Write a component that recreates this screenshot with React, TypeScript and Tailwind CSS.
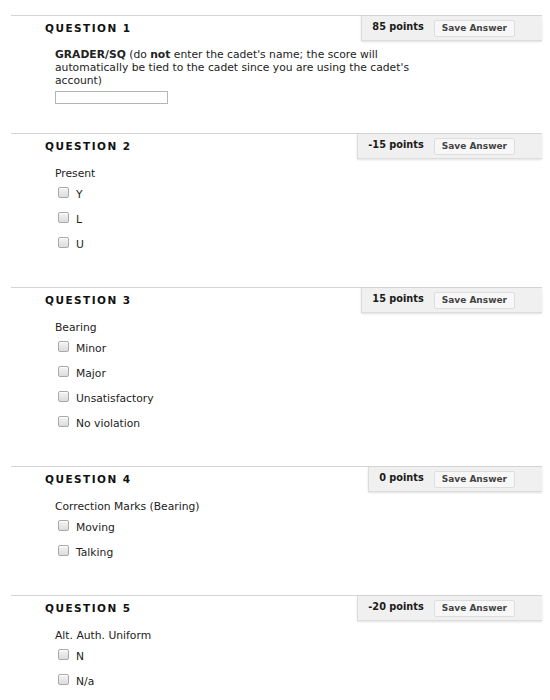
import React from 'react';

type Question = {
  num: number;
  points: string;
  prompt: React.ReactNode;
  options?: string[];
  input?: boolean;
};

const questions: Question[] = [
  {
    num: 1,
    points: '85 points',
    prompt: (
      <>
        <b>GRADER/SQ</b> (do <b>not</b> enter the cadet's name; the score will automatically be tied to the cadet since you are using the cadet's account)
      </>
    ),
    input: true,
  },
  { num: 2, points: '-15 points', prompt: 'Present', options: ['Y', 'L', 'U'] },
  { num: 3, points: '15 points', prompt: 'Bearing', options: ['Minor', 'Major', 'Unsatisfactory', 'No violation'] },
  { num: 4, points: '0 points', prompt: 'Correction Marks (Bearing)', options: ['Moving', 'Talking'] },
  { num: 5, points: '-20 points', prompt: 'Alt. Auth. Uniform', options: ['N', 'N/a'] },
];

const Checkbox: React.FC = () => (
  <span className="inline-block w-[11px] h-[11px] rounded-[2px] border border-[#a9a9a9] bg-gradient-to-b from-[#f4f4f4] to-[#dcdcdc] shadow-[inset_0_1px_0_#fff]" />
);

const QuestionBlock: React.FC<{ q: Question }> = ({ q }) => (
  <div className={`border-t border-[#d4d4d4] ${q.input ? 'pb-[29px]' : 'pb-[32px]'}`}>
    <div className="flex items-start justify-between h-[25px]">
      <h3 className="pl-[34px] pt-[6px] text-[10.5px] font-bold tracking-[0.14em] text-[#111] leading-[13px]">
        QUESTION {q.num}
      </h3>
      <div className="flex items-center h-[25px] bg-[#f0f0f0] border-l border-b border-[#dcdcdc] shadow-[0_1px_2px_rgba(0,0,0,0.12)] pl-[10px] pr-[27px] gap-[10px]">
        <span className="text-[9.75px] font-bold text-[#1a1a1a] -mt-[2px]">{q.points}</span>
        <button className="h-[17px] px-[7px] bg-[#f7f7f7] border border-[#dedede] rounded-[2px] text-[9px] font-bold text-[#444] leading-none">
          Save Answer
        </button>
      </div>
    </div>
    <div className="pl-[44px] pt-[8px] text-[10.75px] leading-[13px] text-[#222]">
      <p className={q.input ? '-mt-[1px] max-w-[362px]' : ''}>{q.prompt}</p>
      {q.input && (
        <input
          type="text"
          className="mt-[4px] block w-[113px] h-[13px] border border-[#b5b5b5] bg-white"
        />
      )}
      {q.options && (
        <ul>
          {q.options.map((o) => (
            <li key={o} className="flex items-center h-[25px] pl-[3px]">
              <Checkbox />
              <span className="ml-[7px] mt-[4px]">{o}</span>
            </li>
          ))}
        </ul>
      )}
    </div>
  </div>
);

export default function App() {
  return (
    <div className="w-[550px] h-[700px] overflow-hidden bg-white pt-[15px] pl-[11px] pr-[8px] font-['DejaVu_Sans','Verdana',sans-serif]">
      {questions.map((q) => (
        <QuestionBlock key={q.num} q={q} />
      ))}
    </div>
  );
}
